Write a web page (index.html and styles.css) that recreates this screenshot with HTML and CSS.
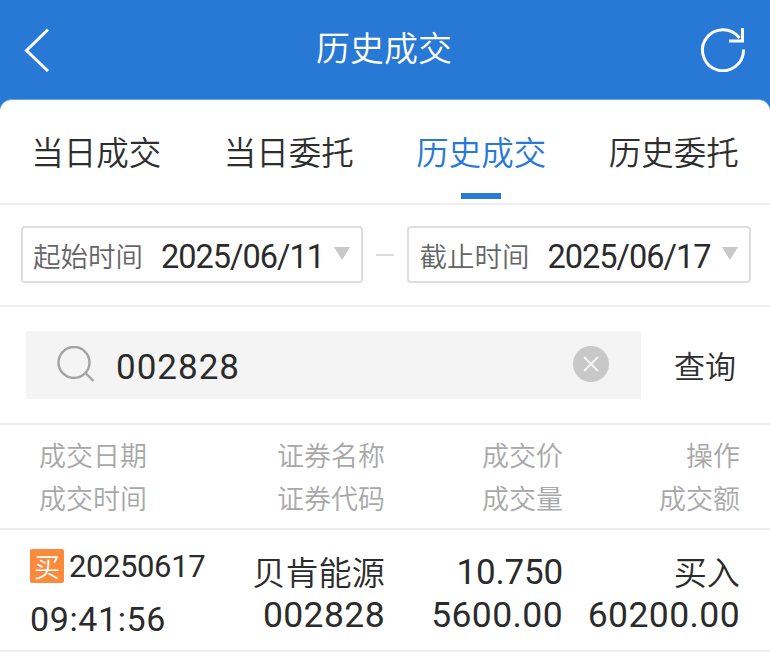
FILE: index.html
```html
<!DOCTYPE html>
<html lang="zh">
<head>
<meta charset="utf-8">
<title>历史成交</title>
<link rel="stylesheet" href="styles.css">
</head>
<body>
<div class="page">
  <header class="topbar">
    <svg class="icon-back" viewBox="0 0 30 46" width="30" height="46"><path d="M26 3.500 L4.500 24.500 L26 45" fill="none" stroke="#fff" stroke-width="3"/></svg>
    <h1 class="title">历史成交</h1>
    <svg class="icon-refresh" viewBox="0 0 46 46" width="46" height="46"><path d="M39.500 12 A20.500 20.500 0 1 0 43.500 23.500" fill="none" stroke="#fff" stroke-width="3"/><path d="M42.500 2 V15 H29" fill="none" stroke="#fff" stroke-width="3"/></svg>
  </header>
  <main class="card">
    <nav class="tabs">
      <div class="tab">当日成交</div>
      <div class="tab">当日委托</div>
      <div class="tab active">历史成交</div>
      <div class="tab">历史委托</div>
    </nav>
    <section class="dates">
      <div class="date-box">
        <span class="date-label">起始时间</span>
        <span class="date-value">2025/06/11</span>
        <span class="caret"></span>
      </div>
      <span class="dash"></span>
      <div class="date-box">
        <span class="date-label">截止时间</span>
        <span class="date-value">2025/06/17</span>
        <span class="caret"></span>
      </div>
    </section>
    <section class="search">
      <div class="search-box">
        <svg class="icon-search" viewBox="0 0 38 38" width="38" height="38"><circle cx="17" cy="16.500" r="15.500" fill="none" stroke="#a3a3a3" stroke-width="2.400"/><path d="M28.500 27 L36.500 35" fill="none" stroke="#a3a3a3" stroke-width="2.400"/></svg>
        <span class="search-text">002828</span>
        <svg class="icon-clear" viewBox="0 0 36 36" width="36" height="36"><circle cx="18" cy="18" r="18" fill="#c8c8c8"/><path d="M11 11 L25 25 M25 11 L11 25" stroke="#f4f4f4" stroke-width="2"/></svg>
      </div>
      <span class="search-btn">查询</span>
    </section>
    <section class="table-head">
      <div class="col c1"><span>成交日期</span><span>成交时间</span></div>
      <div class="col c2"><span>证券名称</span><span>证券代码</span></div>
      <div class="col c3"><span>成交价</span><span>成交量</span></div>
      <div class="col c4"><span>操作</span><span>成交额</span></div>
    </section>
    <section class="table-row">
      <div class="col c1"><span class="date-line"><span class="badge">买</span><span class="date-num">20250617</span></span><span class="time">09:41:56</span></div>
      <div class="col c2"><span class="cjk">贝肯能源</span><span class="num">002828</span></div>
      <div class="col c3"><span class="num price">10.750</span><span class="num vol">5600.00</span></div>
      <div class="col c4"><span class="cjk">买入</span><span class="num">60200.00</span></div>
    </section>
  </main>
</div>
</body>
</html>
```
FILE: styles.css
```css
* { box-sizing: border-box; }
html, body { margin: 0; padding: 0; background: #fff; }
body { font-family: Roboto, "Noto Sans CJK SC", sans-serif; color: #2b2b2b; }
.page { width: 770px; height: 662px; overflow: hidden; background: #2878d6; }
.topbar { height: 99px; display: grid; grid-template-columns: 1fr auto 1fr; align-items: center; padding: 0 24px 0 22px; }
.title { margin: -6px 0 0; font-size: 34px; font-weight: 350; line-height: 40px; color: #fff; font-family: "Noto Sans CJK SC", sans-serif; }
.icon-back { display: block; margin-top: -2px; }
.icon-refresh { display: block; margin-top: -2px; justify-self: end; }
.card { height: 563px; background: #fff; border-radius: 12px 12px 0 0; border-top: 1px solid #6aa5e6; }
.tabs { height: 105px; display: grid; grid-template-columns: repeat(4, 192.500px); border-bottom: 2px solid #eee; }
.tab { position: relative; display: flex; align-items: center; justify-content: center; font-size: 32.500px; font-weight: 350; font-family: "Noto Sans CJK SC", sans-serif; padding-bottom: 3px; color: #2e2e2e; }
.tab.active { color: #2878d6; }
.tab.active::after { content: ""; position: absolute; left: 76px; bottom: 4px; width: 40px; height: 6px; background: #2878d6; }
.dates { height: 102px; padding: 21px 19px 0 20.500px; display: flex; align-items: flex-start; border-bottom: 2px solid #eee; }
.date-box { height: 57px; width: 342.500px; border: 2px solid #dedede; border-radius: 4px; display: flex; align-items: center; padding: 0 11px 0 10.500px; }
.date-box:last-child { width: 344px; }
.date-label { font-family: "Noto Sans CJK SC", sans-serif; font-size: 27.500px; font-weight: 350; color: #666; margin-right: 18px; white-space: nowrap; }
.date-value { font-size: 32.500px; letter-spacing: -1px; white-space: nowrap; color: #2b2b2b; margin-top: 4px; }
.caret { margin-left: auto; margin-top: -2px; width: 0; height: 0; border-left: 8.500px solid transparent; border-right: 8.500px solid transparent; border-top: 13px solid #c8c8c8; }
.dash { width: 18px; height: 2px; margin: 28px 13px 0; background: #dcdcdc; }
.search { height: 118px; padding: 24px 0 0 26px; display: flex; align-items: flex-start; border-bottom: 2px solid #eee; }
.search-box { width: 615px; height: 68px; background: #f4f4f4; display: flex; align-items: center; padding: 0 32px 0 31px; }
.icon-search { display: block; flex: none; }
.search-text { margin-left: 21px; margin-top: 5px; font-size: 35px; letter-spacing: 1px; color: #2b2b2b; }
.icon-clear { margin-left: auto; display: block; margin-top: -2px; }
.search-btn { margin: 15px 0 0 33px; font-size: 31px; font-weight: 350; line-height: 38px; font-family: "Noto Sans CJK SC", sans-serif; color: #2e2e2e; }
.table-head, .table-row { display: grid; padding-right: 30px; grid-template-columns: 210px 175px 178px 177px; border-bottom: 2px solid #eee; }
.table-head { height: 105px; font-size: 27px; font-weight: 350; color: #a8a8a8; font-family: "Noto Sans CJK SC", sans-serif; padding-top: 8px; }
.table-head .col span { line-height: 43px; }
.table-head .c1 { padding-left: 39px; }
.col { display: flex; flex-direction: column; align-items: flex-end; }
.c1 { align-items: flex-start; white-space: nowrap; }
.table-row { height: 122px; font-size: 33.200px; padding-top: 20px; color: #2b2b2b; }
.table-row .col > span { line-height: 43px; white-space: nowrap; }
.table-row .c1 { padding-left: 30px; }
.cjk { font-family: "Noto Sans CJK SC", sans-serif; font-weight: 350; margin-top: -1px; }
.table-row .col > .num { margin-top: 2px; }
.num { font-size: 35.500px; letter-spacing: 0.400px; }
.price { font-size: 35px; letter-spacing: -0.200px; }
.table-row .col > .price { margin-top: 1px; }
.table-row .col > .vol { margin-top: 0; }
.date-line { display: flex; align-items: flex-start; margin-top: -1px; }
.badge { width: 34px; height: 34px; background: #fb8a3c; color: #fff; border-radius: 2px; font-size: 26px; font-weight: 350; line-height: 33px; text-align: center; font-family: "Noto Sans CJK SC", sans-serif; margin-right: 5px; }
.date-num { font-size: 31px; letter-spacing: -0.400px; line-height: 36px; }
.time { font-size: 34px; letter-spacing: 0.600px; margin-top: 13px; }
```
